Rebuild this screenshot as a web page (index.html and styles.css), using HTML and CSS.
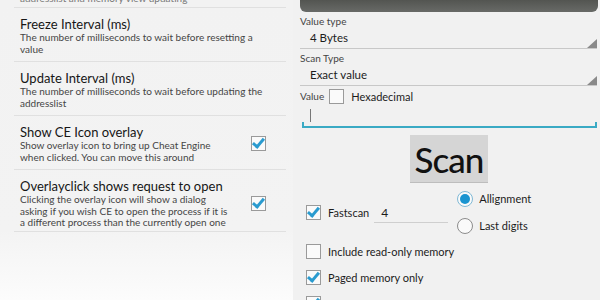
FILE: index.html
```html
<!DOCTYPE html>
<html lang="en">
<head>
  <meta charset="UTF-8">
  <title>Cheat Engine settings</title>
  <link rel="stylesheet" href="styles.css">
</head>
<body>
  <div class="settings">
    <div class="clip"><span class="desc">addresslist and memory view updating</span></div>

    <div class="item">
      <div class="text">
        <div class="title">Freeze Interval (ms)</div>
        <div class="desc">The number of milliseconds to wait before resetting a<br>value</div>
      </div>
    </div>

    <div class="item">
      <div class="text">
        <div class="title">Update Interval (ms)</div>
        <div class="desc">The number of milliseconds to wait before updating the<br>addresslist</div>
      </div>
    </div>

    <div class="item">
      <div class="text">
        <div class="title">Show CE Icon overlay</div>
        <div class="desc">Show overlay icon to bring up Cheat Engine<br>when clicked. You can move this around</div>
      </div>
      <span class="cb on"></span>
    </div>

    <div class="item">
      <div class="text">
        <div class="title">Overlayclick shows request to open</div>
        <div class="desc">Clicking the overlay icon will show a dialog<br>asking if you wish CE to open the process if it is<br>a different process than the currently open one</div>
      </div>
      <span class="cb on"></span>
    </div>
  </div>

  <div class="scanner">
    <div class="topbar"></div>

    <div class="label">Value type</div>
    <div class="spinner">4 Bytes<span class="arrow"></span></div>

    <div class="label">Scan Type</div>
    <div class="spinner">Exact value<span class="arrow"></span></div>

    <div class="value-row">
      <span class="label">Value</span>
      <span class="cb"></span>
      <span class="opt">Hexadecimal</span>
    </div>
    <div class="edit"><span class="cursor"></span></div>

    <div class="scan-wrap"><button class="scan-btn">Scan</button></div>

    <div class="fast-row">
      <div class="check-line">
        <span class="cb on"></span>
        <span class="opt">Fastscan</span>
        <span class="small-input">4</span>
      </div>
      <div class="radios">
        <div class="radio-line"><span class="radio on"></span><span class="opt">Allignment</span></div>
        <div class="radio-line"><span class="radio"></span><span class="opt">Last digits</span></div>
      </div>
    </div>

    <div class="check-line row first"><span class="cb"></span><span class="opt">Include read-only memory</span></div>
    <div class="check-line row"><span class="cb on"></span><span class="opt">Paged memory only</span></div>
    <div class="check-line row"><span class="cb on"></span></div>
  </div>
</body>
</html>
```

FILE: styles.css
```css
body {
  margin:0; padding:0;
  width:600px; height:300px; overflow:hidden;
  font-family: Lato, "Open Sans", sans-serif;
  background:#f2f2f2; color:#1c1c1c;
  display:flex;
}

/* left: settings list */
.settings {
  width:293px; flex-shrink:0;
  background:linear-gradient(#f2f2f2 0, #f3f3f3 230px, #fcfcfc 300px);
}
.clip {
  height:7px; overflow:hidden;
  display:flex; align-items:flex-end;
  margin:0 7px 0 14px; padding-left:6px;
  border-bottom:1px solid #e0e0e0;
}
.clip .desc { line-height:10px; color:#777; margin-bottom:4px; }
.item {
  display:flex; align-items:center;
  margin:0 7px 0 14px;
  padding:8px 20px 6px 6px;
  border-bottom:1px solid #e0e0e0;
}
.item:last-child { padding-bottom:2px; }
.item .text { flex:1; }
.title { font-size:13px; line-height:16px; color:#161616; }
.desc { font-size:10px; line-height:11.5px; color:#454545; white-space:nowrap; }

/* checkbox + radio */
.cb {
  width:13px; height:13px; flex-shrink:0;
  border:1px solid #9a9a9a; background:#fafafa;
  position:relative;
}
.cb.on::after {
  content:""; position:absolute;
  left:3px; top:-1px;
  width:4px; height:9px;
  border:solid #2a9bcf; border-width:0 3px 3px 0;
  transform:rotate(40deg);
}
.radio {
  width:14px; height:14px; border-radius:50%;
  border:1px solid #8c8c8c; background:#fafafa;
  position:relative; flex-shrink:0;
}
.radio.on { border-color:#7fb9d6; }
.radio.on::after {
  content:""; position:absolute;
  left:2px; top:2px; width:10px; height:10px;
  border-radius:50%; background:#1a94d0;
}

/* right: scanner */
.scanner {
  flex:1; padding:0 2px 0 7px;
  background:#f1f1f1;
}
.topbar {
  height:12px;
  background:linear-gradient(#535551, #686a67);
  border-radius:0 0 6px 6px;
}
.label { font-size:10px; line-height:12px; color:#444; }
.scanner > .label { margin-top:3px; }
.spinner {
  position:relative;
  font-size:11.5px; line-height:21px;
  padding:0 0 0 10px;
  border-bottom:1px solid #c8c8c8;
  margin-right:1px;
}
.arrow {
  position:absolute; right:0; bottom:0;
  width:0; height:0;
  border-style:solid; border-width:0 0 9px 10px;
  border-color:transparent transparent #8a8a8a transparent;
}
.value-row {
  display:flex; align-items:center; gap:7px;
  height:20px;
}
.value-row .label { margin-right:-2px; }
.opt { font-size:11px; color:#1c1c1c; }
.edit {
  height:17px; margin:0 1px 0 2px;
  border-bottom:2px solid #3aaac4;
  position:relative;
}
.edit::before, .edit::after {
  content:""; position:absolute; bottom:0;
  width:2px; height:4px; background:#3aaac4;
}
.edit::before { left:0; }
.edit::after { right:0; }
.cursor {
  display:block; width:1px; height:13px;
  background:#777; margin:3px 0 0 8px;
}
.scan-wrap { display:flex; justify-content:center; padding-top:7px; }
.scan-btn {
  width:78px; height:48px;
  border:none; border-bottom:1px solid #bdbdbd;
  background:#d5d5d5; color:#111;
  font-family: Lato, sans-serif; font-size:35px; font-weight:500;
  letter-spacing:-1px;
  padding:0; cursor:pointer;
}
.fast-row {
  display:flex; align-items:center;
  margin-top:2px;
}
.check-line { display:flex; align-items:center; gap:7px; }
.fast-row .check-line { padding-left:6px; }
.small-input {
  width:67px; margin-left:-2px; padding-left:7px;
  font-size:12px; line-height:18px;
  border-bottom:1px solid #cfcfcf;
  position:relative; top:1px;
}
.radios { margin-left:9px; }
.radio-line { display:flex; align-items:center; gap:6px; height:27px; }
.row { padding-left:6px; height:26px; }
.row.first { margin-top:-1px; }
```
